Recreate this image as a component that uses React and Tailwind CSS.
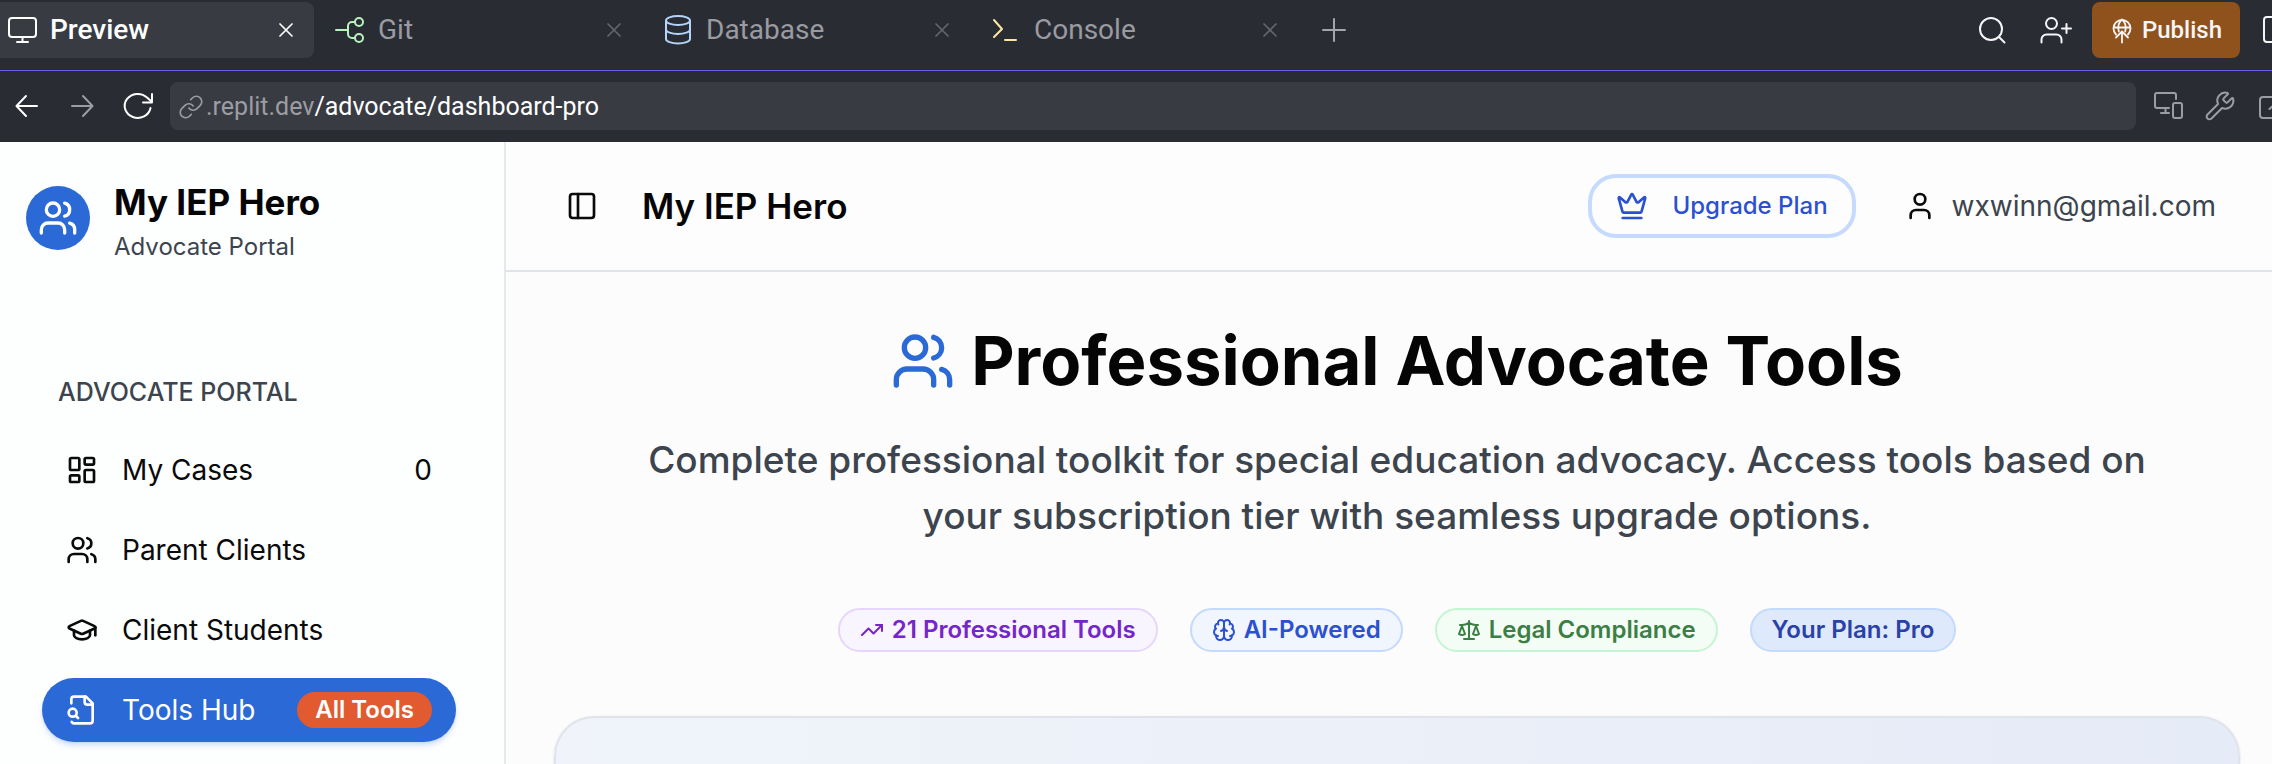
import React from "react";
import {
  Crown,
  GraduationCap,
  LayoutDashboard,
  Link,
  PanelLeft,
  TrendingUp,
  User,
  Users,
  Wrench,
} from "lucide-react";

function Line({ width = 32, height = 32, stroke = 2, className = "", children }) {
  return (
    <svg
      width={width}
      height={height}
      viewBox={`0 0 ${width} ${height}`}
      fill="none"
      stroke="currentColor"
      strokeWidth={stroke}
      strokeLinecap="round"
      strokeLinejoin="round"
      aria-hidden="true"
      className={`shrink-0 ${className}`}
    >
      {children}
    </svg>
  );
}

function Glyph({ size, children }) {
  return (
    <svg
      width={size}
      height={size}
      viewBox="0 0 24 24"
      fill="none"
      stroke="currentColor"
      strokeWidth="2"
      strokeLinecap="round"
      strokeLinejoin="round"
      aria-hidden="true"
      className="shrink-0"
    >
      {children}
    </svg>
  );
}

const MonitorIcon = () => (
  <Line>
    <rect x="3" y="4" width="27" height="19" rx="3" />
    <path d="M16.5 23v5M11 28h11" />
  </Line>
);

const GitIcon = () => (
  <Line className="text-[#b6f3bd]">
    <path d="M2 16h12M21 8h-3a4 4 0 0 0-4 4v8a4 4 0 0 0 4 4h3" />
    <circle cx="25" cy="8" r="4" />
    <circle cx="25" cy="24" r="4" />
  </Line>
);

const DatabaseIcon = () => (
  <Line className="text-[#b3d4fb]">
    <ellipse cx="16" cy="6.5" rx="12" ry="4.5" />
    <path d="M4 6.5v18.5c0 2.500 5.400 4.500 12 4.500s12-2 12-4.500V6.5" />
    <path d="M4 15.500c0 2.500 5.400 4.500 12 4.500s12-2 12-4.500" />
  </Line>
);

const ConsoleIcon = () => (
  <Line className="text-[#fbe7a5]">
    <path d="M4 6l8 9-8 8M15 26h11" />
  </Line>
);

const CloseIcon = () => (
  <Line width={20} height={20}>
    <path d="M4 4l12 12M16 4L4 16" strokeWidth="1.700" />
  </Line>
);

const PublishIcon = () => (
  <Line width={24} height={28} stroke={1.8}>
    <path d="M6 18.500a8.500 8.500 0 1 1 12 0" />
    <path d="M3.800 11.500h16.400" />
    <path d="M8.800 15.500c-1-4.500 0-9.500 3.200-12 3.200 2.500 4.200 7.500 3.200 12" />
    <path d="M12 26.500V15.500M6 21.500l6-6 6 6" />
  </Line>
);

const FileSearchIcon = () => (
  <Glyph size={32}>
    <path d="M14 2v4a2 2 0 0 0 2 2h4" />
    <path d="M4.268 21a2 2 0 0 0 1.727 1H18a2 2 0 0 0 2-2V7l-5-5H6a2 2 0 0 0-2 2v3" />
    <path d="m9 18-1.500-1.500" />
    <circle cx="5" cy="14" r="3" />
  </Glyph>
);

const BrainIcon = () => (
  <Glyph size={24}>
    <path d="M12 5a3 3 0 1 0-5.997.125 4 4 0 0 0-2.526 5.770 4 4 0 0 0 .556 6.588A4 4 0 1 0 12 18Z" />
    <path d="M12 5a3 3 0 1 1 5.997.125 4 4 0 0 1 2.526 5.770 4 4 0 0 1-.556 6.588A4 4 0 1 1 12 18Z" />
    <path d="M15 13a4.500 4.500 0 0 1-3-4 4.500 4.500 0 0 1-3 4" />
    <path d="M17.599 6.500a3 3 0 0 0 .399-1.375M6.003 5.125A3 3 0 0 0 6.401 6.500" />
    <path d="M3.477 10.896a4 4 0 0 1 .585-.396M19.938 10.500a4 4 0 0 1 .585.396" />
    <path d="M6 18a4 4 0 0 1-1.967-.516M19.967 17.484A4 4 0 0 1 18 18" />
  </Glyph>
);

const ScaleIcon = () => (
  <Glyph size={24}>
    <path d="m16 16 3-8 3 8c-.870.650-1.920 1-3 1s-2.130-.350-3-1Z" />
    <path d="m2 16 3-8 3 8c-.870.650-1.920 1-3 1s-2.130-.350-3-1Z" />
    <path d="M7 21h10M12 3v18M3 7h2c2 0 5-1 7-2 2 1 5 2 7 2h2" />
  </Glyph>
);

const tabs = [
  { name: "Preview", icon: <MonitorIcon />, active: true },
  { name: "Git", icon: <GitIcon /> },
  { name: "Database", icon: <DatabaseIcon /> },
  { name: "Console", icon: <ConsoleIcon /> },
];

function TabBar() {
  return (
    <div className="flex h-[70px] items-start pt-[2px]">
      <div className="-ml-[6px] flex gap-2" role="tablist">
        {tabs.map((tab) => (
          <div
            key={tab.name}
            className={`flex h-14 w-80 items-center rounded-lg pl-3 pr-[18px] ${
              tab.active ? "bg-[#393b43] text-white" : "text-[#9a9ba1]"
            }`}
          >
            <button
              type="button"
              role="tab"
              aria-selected={!!tab.active}
              className={`flex grow items-center gap-3 text-[28px] ${tab.active ? "font-medium" : ""}`}
            >
              {tab.icon}
              {tab.name}
            </button>
            <button
              type="button"
              aria-label={`Close ${tab.name}`}
              className={tab.active ? "text-white" : "text-[#64666d]"}
            >
              <CloseIcon />
            </button>
          </div>
        ))}
      </div>
      <button type="button" aria-label="New tab" className="flex h-14 items-center pl-5 text-[#a5a6ab]">
        <Line>
          <path d="M16 5v22M5 16h22" />
        </Line>
      </button>

      <div className="-mr-[18px] ml-auto flex h-14 items-center text-[#f5f5f7]">
        <button type="button" aria-label="Search">
          <Line>
            <circle cx="15" cy="15" r="11" />
            <path d="M23 23l5.500 5.500" />
          </Line>
        </button>
        <button type="button" aria-label="Invite" className="ml-[30px]">
          <Line width={36}>
            <circle cx="13.500" cy="9.500" r="5.500" />
            <path d="M3.500 28.500v-3a5 5 0 0 1 5-5h10a5 5 0 0 1 5 5v3M28.500 10v9M24 14.500h9" />
          </Line>
        </button>
        <button
          type="button"
          className="ml-[18px] flex h-14 items-center gap-2 rounded-lg bg-[#8f521c] px-[18px] text-[24px] font-medium"
        >
          <PublishIcon />
          Publish
        </button>
        <button type="button" aria-label="Toggle panel" className="ml-[18px]">
          <Line>
            <rect x="6" y="3" width="26" height="25" rx="3" />
          </Line>
        </button>
      </div>
    </div>
  );
}

function AddressBar() {
  return (
    <div className="flex items-center border-t border-[#6a5cf0] pb-3 pt-[11px] text-[#9c9da2]">
      <button type="button" aria-label="Back" className="ml-[10px] text-white">
        <Line>
          <path d="M27 16H7M16 6L6.500 16l9.500 10" />
        </Line>
      </button>
      <button type="button" aria-label="Forward" className="ml-6">
        <Line>
          <path d="M6 16h20M17 6l9.500 10L17 26" />
        </Line>
      </button>
      <button type="button" aria-label="Reload" className="ml-6 text-white">
        <Line>
          <path d="M28.500 18A13 12 0 1 1 25 7.500L30 12M30 4v8.500h-9" />
        </Line>
      </button>
      <form className="ml-4 flex h-12 min-w-0 grow items-center rounded-lg bg-[#393b43] px-2 pt-[2px] text-[25px]">
        <Link size={26} strokeWidth={1.5} className="shrink-0" aria-hidden="true" />
        <label htmlFor="path" className="ml-[2px]">
          .replit.dev
        </label>
        <input
          id="path"
          type="text"
          defaultValue="/advocate/dashboard-pro"
          className="min-w-0 grow bg-transparent text-white outline-none"
        />
      </form>
      <div className="-mr-[18px] flex items-center pl-4">
        <button type="button" aria-label="Devices">
          <Line>
            <path d="M24 9V5a2 2 0 0 0-2-2H5a2 2 0 0 0-2 2v11a2 2 0 0 0 2 2h12M13.500 18v5M9 23h8" />
            <rect x="21" y="13" width="9" height="15" rx="2" />
          </Line>
        </button>
        <button type="button" aria-label="Developer tools" className="ml-5">
          <Wrench size={32} strokeWidth={1.5} />
        </button>
        <button type="button" aria-label="Open in new tab" className="ml-[22px]">
          <Line>
            <path d="M18 7H5a3 3 0 0 0-3 3v15a3 3 0 0 0 3 3h15M11.500 19L24 7" />
          </Line>
        </button>
      </div>
    </div>
  );
}

const menu = [
  { name: "My Cases", icon: <LayoutDashboard size={32} />, count: 0 },
  { name: "Parent Clients", icon: <Users size={32} /> },
  { name: "Client Students", icon: <GraduationCap size={32} /> },
  { name: "Tools Hub", icon: <FileSearchIcon />, badge: "All Tools" },
];

function Sidebar() {
  return (
    <aside className="w-[506px] shrink-0 border-r-2 border-[#e6e8ed] bg-[#fdfefe] pt-10">
      <div className="flex gap-6 pl-[26px]">
        <div className="mt-1 flex size-16 items-center justify-center rounded-full bg-[#2b69d6] text-white">
          <Users size={40} aria-hidden="true" />
        </div>
        <div>
          <div className="text-[35px] font-bold leading-10 text-[#050506]">My IEP Hero</div>
          <div className="text-[24px] leading-[50px] text-[#3c444e]">Advocate Portal</div>
        </div>
      </div>
      <h2 className="mt-[100px] pl-[58px] text-[25px] font-medium leading-10 text-[#3c444e]">
        ADVOCATE PORTAL
      </h2>
      <nav className="mt-[26px] flex flex-col gap-4 pl-[42px] pr-12">
        {menu.map((item) => (
          <a
            key={item.name}
            href="#"
            className={`flex h-16 items-center gap-6 rounded-full px-6 text-[28px] ${
              item.badge ? "bg-[#2b69d6] text-white shadow-md shadow-[#2b69d6]/20" : "text-[#0a0a0b]"
            }`}
          >
            {item.icon}
            <span className="grow">{item.name}</span>
            {item.count !== undefined && <span>{item.count}</span>}
            {item.badge && (
              <span className="flex h-9 items-center rounded-full bg-[#e15a30] px-[18px] text-[24px] font-semibold">
                {item.badge}
              </span>
            )}
          </a>
        ))}
      </nav>
    </aside>
  );
}

function Pill({ className, icon, children }) {
  return (
    <span
      className={`flex h-11 items-center gap-2 rounded-full border-2 px-5 text-[24px] font-semibold ${className}`}
    >
      {icon}
      {children}
    </span>
  );
}

function Dashboard() {
  return (
    <main className="flex min-w-0 grow flex-col bg-[#fcfcfd]">
      <header className="flex h-[130px] shrink-0 items-center border-b-2 border-[#e1e5ea] bg-[#fdfdfd] pl-[60px] pr-14">
        <button type="button" aria-label="Toggle sidebar" className="text-[#0a0a0b]">
          <PanelLeft size={32} />
        </button>
        <div className="ml-11 text-[35px] font-semibold text-[#050506]">My IEP Hero</div>
        <button
          type="button"
          className="ml-auto flex h-16 items-center gap-6 rounded-[28px] border-4 border-[#c5dafc] px-6 text-[24px] font-medium text-[#2b50d0]"
        >
          <Crown size={32} />
          Upgrade Plan
        </button>
        <div className="ml-12 flex items-center gap-4 text-[28px] text-[#3c444e]">
          <User size={32} className="text-[#0a0a0b]" aria-hidden="true" />
          wxwinn@gmail.com
        </div>
      </header>
      <section className="flex grow flex-col pl-12 pr-8 pt-12 text-center">
        <h1 className="flex h-[82px] items-center justify-center gap-4 text-[67px] font-bold text-[#050506]">
          <Users size={64} className="text-[#2b69d6]" aria-hidden="true" />
          Professional Advocate Tools
        </h1>
        <p className="mx-auto mt-[30px] max-w-[1536px] text-[37px] font-medium leading-[56px] text-[#3c444e]">
          Complete professional toolkit for special education advocacy. Access tools based on your subscription
          tier with seamless upgrade options.
        </p>
        <div className="mt-16 flex justify-center gap-8">
          <Pill className="border-[#e7d6fc] bg-[#f9f5fe] text-[#7526c9]" icon={<TrendingUp size={24} />}>
            21 Professional Tools
          </Pill>
          <Pill className="border-[#c3dafc] bg-[#f0f5fe] text-[#2b50d0]" icon={<BrainIcon />}>
            AI-Powered
          </Pill>
          <Pill className="border-[#c4f5d2] bg-[#f3fcf5] text-[#3b7f44]" icon={<ScaleIcon />}>
            Legal Compliance
          </Pill>
          <Pill className="border-[#c3dafc] bg-[#dee9fc] text-[#2941a9]">Your Plan: Pro</Pill>
        </div>
        <div className="mt-16 min-h-12 grow rounded-t-[40px] border-2 border-b-0 border-[#e0e4ea] bg-linear-to-r from-[#f0f4fa] to-[#e5ebf7] shadow-sm" />
      </section>
    </main>
  );
}

export default function App() {
  return (
    <div className="flex h-screen flex-col overflow-hidden font-['Inter',sans-serif]">
      <div className="shrink-0 overflow-hidden bg-[#2a2c34] font-['Roboto',sans-serif]">
        <TabBar />
        <AddressBar />
      </div>
      <div className="flex min-h-0 grow">
        <Sidebar />
        <Dashboard />
      </div>
    </div>
  );
}
